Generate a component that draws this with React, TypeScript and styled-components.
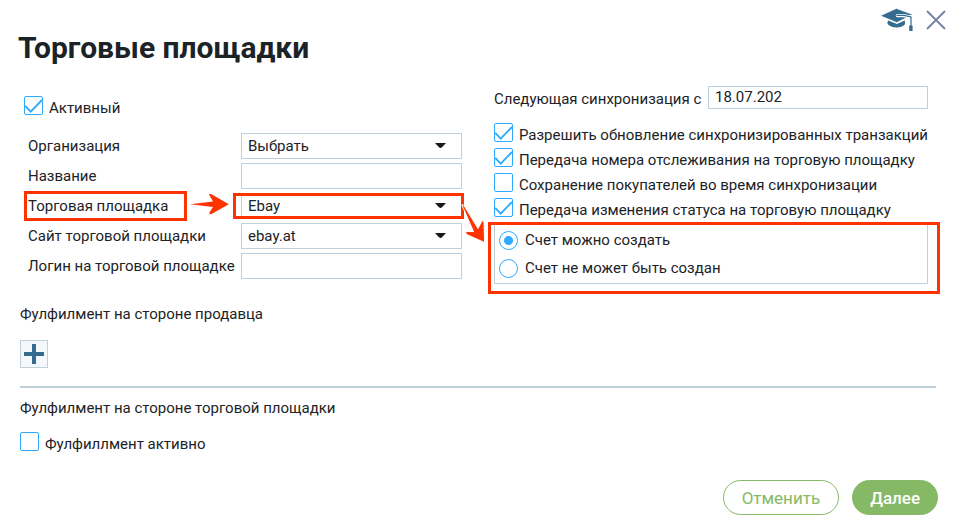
import React, { useId, useState } from "react";
import styled, { createGlobalStyle, css } from "styled-components";

const colors = {
  text: "#1b2327",
  border: "#c0d0da",
  blue: "#2eaaff",
  navy: "#356b8e",
  red: "#ff3300",
  green: "#86b966",
};

const GlobalStyle = createGlobalStyle`
  *, *::before, *::after { box-sizing: border-box; }
  body {
    margin: 0;
    background: #fff;
    color: ${colors.text};
    font: 15px/24px Roboto, "Liberation Sans", sans-serif;
  }
  button, input, select { font: inherit; color: inherit; margin: 0; }
`;

const Dialog = styled.main`
  padding: 8px 18px 14px 20px;
`;

const Header = styled.header`
  display: flex;
  justify-content: space-between;
  align-items: flex-start;
  margin: 0 -8px 0 -2px;
`;

const Title = styled.h1`
  margin: 20px 0 0;
  font-size: 30px;
  line-height: 40px;
  font-weight: 700;
`;

const HeaderActions = styled.div`
  display: flex;
  gap: 12px;
`;

const IconButton = styled.button`
  display: flex;
  align-items: center;
  height: 24px;
  padding: 0;
  border: 0;
  background: none;
`;

const Columns = styled.div`
  display: grid;
  grid-template-columns: 442fr 434fr;
  gap: 32px;
  margin: 18px 10px 0 0;
`;

const LeftColumn = styled.div`
  display: flex;
  flex-direction: column;
  gap: 11px;
  padding-top: 10px;
`;

const Indented = styled.div`
  padding-left: 4px;
`;

const CheckRow = styled.div`
  display: flex;
  align-items: flex-start;
  gap: 6px;
  white-space: nowrap;
`;

const MarkBox = styled.span`
  position: relative;
  display: flex;
  flex: none;
`;

const CheckInput = styled.input`
  appearance: none;
  width: 19px;
  height: 19px;
  border: 1px solid ${colors.blue};
  border-radius: 2px;
  background: #fff;
`;

const CheckMark = styled.svg`
  position: absolute;
  inset: 0;
  pointer-events: none;
`;

const FieldRow = styled.div`
  display: grid;
  grid-template-columns: minmax(0, 1fr) 221px;
  align-items: center;
  height: 30px;
  padding-left: 8px;
  line-height: 30px;
  white-space: nowrap;
`;

const control = css`
  width: 100%;
  height: 26px;
  padding: 0 6px;
  border: 1px solid ${colors.border};
  border-radius: 0;
  background: #fff;
  line-height: 24px;
`;

const TextInput = styled.input`
  ${control}
`;

const Select = styled.select`
  ${control}
  appearance: none;
`;

const FieldBox = styled.div`
  position: relative;
  display: flex;
  align-items: center;
`;

const Caret = styled.svg`
  position: absolute;
  right: 16px;
  pointer-events: none;
`;

const Marked = styled.div`
  position: relative;
`;

const Highlight = styled.span<{ $inset: string }>`
  position: absolute;
  inset: ${(p) => p.$inset};
  border: 3px solid ${colors.red};
  pointer-events: none;
  z-index: 1;
`;

const ArrowRight = styled.svg`
  position: absolute;
  right: 12px;
  top: 2px;
  pointer-events: none;
`;

const ArrowDown = styled.svg`
  position: absolute;
  left: 220px;
  top: 11px;
  pointer-events: none;
  z-index: 2;
`;

const RightColumn = styled.div`
  display: flex;
  flex-direction: column;
`;

const DateRow = styled.div`
  display: grid;
  grid-template-columns: minmax(0, 1fr) 220px;
  line-height: 26px;
  white-space: nowrap;
`;

const DateInput = styled(TextInput)`
  height: 23px;
  padding-bottom: 2px;
`;

const CheckList = styled.div`
  display: grid;
  gap: 1px;
  margin-top: 11px;
`;

const RadioBox = styled.div`
  position: relative;
  display: grid;
  gap: 4px;
  margin-top: 2px;
  padding: 3px 4px;
  border: 1px solid ${colors.border};
`;

const RadioRow = styled.div`
  display: flex;
  align-items: center;
  gap: 7px;
`;

const RadioInput = styled.input`
  appearance: none;
  flex: none;
  width: 19px;
  height: 19px;
  border: 1px solid ${colors.blue};
  border-radius: 50%;
  background: #fff;

  &:checked {
    background: radial-gradient(circle, ${colors.blue} 4px, #fff 5px);
  }
`;

const Section = styled.section<{ $divided?: boolean }>`
  display: flex;
  flex-direction: column;
  align-items: flex-start;
  gap: ${(p) => (p.$divided ? 12 : 14)}px;
  margin: ${(p) => (p.$divided ? "18px 2px 0 0" : "18px 0 0")};
  padding-top: ${(p) => (p.$divided ? 8 : 0)}px;
  ${(p) => p.$divided && `border-top: 2px solid ${colors.border};`}
`;

const SectionTitle = styled.h2`
  margin: 0;
  font-size: 15px;
  font-weight: 400;
  line-height: 24px;
`;

const AddButton = styled.button`
  display: flex;
  align-items: center;
  justify-content: center;
  width: 28px;
  height: 28px;
  padding: 0;
  border: 1px solid ${colors.border};
  background: #f4f8fa;
`;

const Footer = styled.footer`
  display: flex;
  justify-content: flex-end;
  gap: 13px;
  margin-top: 24px;
`;

const PillButton = styled.button<{ $primary?: boolean }>`
  height: 35px;
  padding: 0 ${(p) => (p.$primary ? 17 : 18)}px;
  border: 1px solid ${colors.green};
  border-radius: 18px;
  background: ${(p) => (p.$primary ? colors.green : "#fff")};
  color: ${(p) => (p.$primary ? "#fff" : colors.green)};
  font-size: 17px;
  font-weight: ${(p) => (p.$primary ? 500 : 400)};
`;

function Checkbox({ label, initial = false }: { label: string; initial?: boolean }) {
  const id = useId();
  const [checked, setChecked] = useState(initial);
  return (
    <CheckRow>
      <MarkBox>
        <CheckInput
          id={id}
          type="checkbox"
          checked={checked}
          onChange={(e) => setChecked(e.target.checked)}
        />
        {checked && (
          <CheckMark width="19" height="19" viewBox="0 0 19 19" fill="none">
            <path d="M1.2 9.8 6.7 15.6 18 4" stroke={colors.blue} strokeWidth="1.8" />
          </CheckMark>
        )}
      </MarkBox>
      <label htmlFor={id}>{label}</label>
    </CheckRow>
  );
}

function SelectBox({ id, value, children }: { id: string; value: string; children?: React.ReactNode }) {
  return (
    <FieldBox>
      <Select id={id} defaultValue={value}>
        <option value={value}>{value}</option>
      </Select>
      <Caret width="11" height="6" viewBox="0 0 11 6">
        <path d="M0 0H11L7 4.3Q5.5 5.8 4 4.3Z" fill="#151a1c" />
      </Caret>
      {children}
    </FieldBox>
  );
}

function CapIcon() {
  return (
    <svg width="34" height="24" viewBox="0 0 34 24" fill="none">
      <path
        d="M8.2 12.4C7 14 7.4 15.6 8 16.6 10.4 18.6 13 19.6 16.6 19.6 20.2 19.6 22.8 18.4 24.8 16.6 25.2 15.2 25.2 13.8 24.6 12.4L17 16Z"
        fill={colors.navy}
      />
      <path d="M.4 7.8 16.4 .4 32.6 6.6 16.8 14.6Z" fill={colors.navy} stroke="#fff" strokeWidth=".6" />
      <path d="M17.4 7.6H24L30.6 9.2" stroke="#fff" strokeWidth="3.4" strokeLinecap="round" />
      <path d="M17 7.4H24L31 9V18" stroke={colors.navy} strokeWidth="1.2" strokeLinecap="round" />
      <rect x="29.2" y="17.6" width="3.4" height="5.4" rx=".6" fill={colors.navy} />
    </svg>
  );
}

export default function App() {
  const [invoice, setInvoice] = useState("yes");
  return (
    <>
      <GlobalStyle />
      <Dialog>
        <Header>
          <Title>Торговые площадки</Title>
          <HeaderActions>
            <IconButton type="button" aria-label="Обучение">
              <CapIcon />
            </IconButton>
            <IconButton type="button" aria-label="Закрыть">
              <svg width="20" height="20" viewBox="0 0 20 20">
                <path d="M1 1 19 19M19 1 1 19" stroke="#7084a6" strokeWidth="1.8" />
              </svg>
            </IconButton>
          </HeaderActions>
        </Header>

        <Columns>
          <LeftColumn>
            <Indented>
              <Checkbox label="Активный" initial />
            </Indented>
            <div>
              <FieldRow>
                <label htmlFor="organization">Организация</label>
                <SelectBox id="organization" value="Выбрать" />
              </FieldRow>
              <FieldRow>
                <label htmlFor="name">Название</label>
                <TextInput id="name" />
              </FieldRow>
              <FieldRow>
                <Marked>
                  <label htmlFor="platform">Торговая площадка</label>
                  <Highlight $inset="0 54px 0 -4px" />
                  <ArrowRight width="39" height="22" viewBox="0 0 39 22">
                    <path
                      d="M0 11.2 23 8.5 19 1.5Q19.5 .2 21.5 1.2L38.8 11.2 21 21.2Q19 21.4 19.4 19.6L23 14Z"
                      fill={colors.red}
                    />
                  </ArrowRight>
                </Marked>
                <SelectBox id="platform" value="Ebay">
                  <Highlight $inset="0 -2px 0 -8px" />
                  <ArrowDown width="27" height="40" viewBox="0 0 27 40">
                    <path
                      d="M.8 .8Q2 .2 3.2 1.8L17 24.5 21 16.8Q22.6 16 23 18L23.6 38.6 5 30.2Q4 28 6 27.4L12.5 27.6Z"
                      fill={colors.red}
                      stroke="#fff"
                      strokeWidth="1"
                    />
                  </ArrowDown>
                </SelectBox>
              </FieldRow>
              <FieldRow>
                <label htmlFor="site">Сайт торговой площадки</label>
                <SelectBox id="site" value="ebay.at" />
              </FieldRow>
              <FieldRow>
                <label htmlFor="login">Логин на торговой площадке</label>
                <TextInput id="login" />
              </FieldRow>
            </div>
          </LeftColumn>

          <RightColumn>
            <DateRow>
              <label htmlFor="next-sync">Следующая синхронизация с</label>
              <DateInput id="next-sync" defaultValue="18.07.202" />
            </DateRow>
            <CheckList>
              <Checkbox label="Разрешить обновление синхронизированных транзакций" initial />
              <Checkbox label="Передача номера отслеживания на торговую площадку" initial />
              <Checkbox label="Сохранение покупателей во время синхронизации" />
              <Checkbox label="Передача изменения статуса на торговую площадку" initial />
            </CheckList>
            <RadioBox role="radiogroup" aria-label="Счет">
              <RadioRow>
                <RadioInput
                  id="invoice-yes"
                  type="radio"
                  name="invoice"
                  checked={invoice === "yes"}
                  onChange={() => setInvoice("yes")}
                />
                <label htmlFor="invoice-yes">Счет можно создать</label>
              </RadioRow>
              <RadioRow>
                <RadioInput
                  id="invoice-no"
                  type="radio"
                  name="invoice"
                  checked={invoice === "no"}
                  onChange={() => setInvoice("no")}
                />
                <label htmlFor="invoice-no">Счет не может быть создан</label>
              </RadioRow>
              <Highlight $inset="-3px -13px -11px -7px" />
            </RadioBox>
          </RightColumn>
        </Columns>

        <Section>
          <SectionTitle>Фулфилмент на стороне продавца</SectionTitle>
          <AddButton type="button" aria-label="Добавить">
            <svg width="20" height="20" viewBox="0 0 20 20">
              <path d="M8 0h4v8h8v4h-8v8H8v-8H0V8h8z" fill={colors.navy} />
            </svg>
          </AddButton>
        </Section>

        <Section $divided>
          <SectionTitle>Фулфилмент на стороне торговой площадки</SectionTitle>
          <Checkbox label="Фулфиллмент активно" />
        </Section>

        <Footer>
          <PillButton type="button">Отменить</PillButton>
          <PillButton type="button" $primary>
            Далее
          </PillButton>
        </Footer>
      </Dialog>
    </>
  );
}
